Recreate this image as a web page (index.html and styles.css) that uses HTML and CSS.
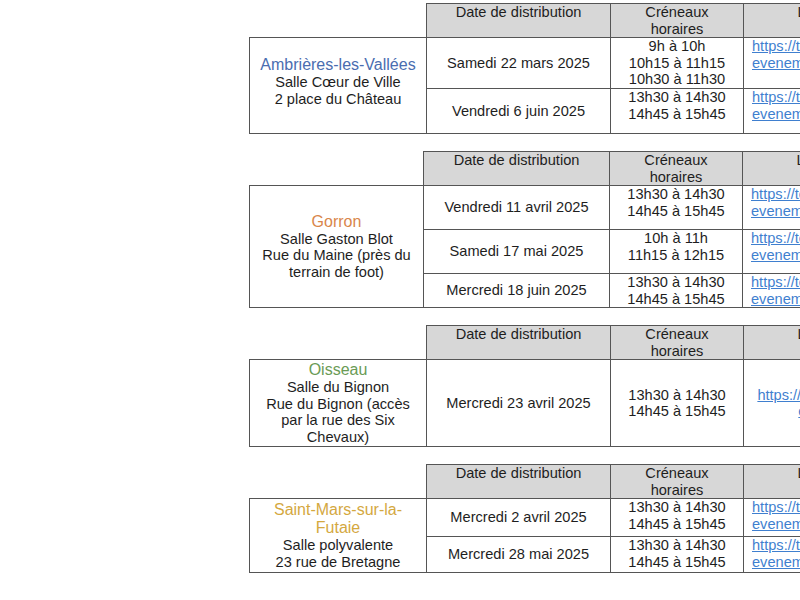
FILE: index.html
```html
<!DOCTYPE html>
<html lang="fr">
<head>
<meta charset="utf-8">
<title>Distributions</title>
<link rel="stylesheet" href="styles.css">
</head>
<body>
<div class="page">

  <table class="sched">
    <colgroup><col class="c-place"><col class="c-date"><col class="c-time"><col class="c-link"></colgroup>
    <tr class="head"><th class="blank"></th><th>Date de distribution</th><th>Créneaux<br>horaires</th><th>Lien d'inscription</th></tr>
    <tr class="h51">
      <td class="place up" rowspan="2"><span class="name ambrieres">Ambrières-les-Vallées</span>Salle Cœur de Ville<br>2 place du Château</td>
      <td class="date">Samedi 22 mars 2025</td>
      <td class="time">9h à 10h<br>10h15 à 11h15<br>10h30 à 11h30</td>
      <td class="link"><a href="#">https://tessera.secours-53.org/<br>evenements/ambrieres-mars25</a></td>
    </tr>
    <tr class="h45">
      <td class="date">Vendredi 6 juin 2025</td>
      <td class="time">13h30 à 14h30<br>14h45 à 15h45</td>
      <td class="link"><a href="#">https://tessera.secours-53.org/<br>evenements/ambrieres-juin25</a></td>
    </tr>
  </table>

  <table class="sched narrow">
    <colgroup><col class="c-place"><col class="c-date"><col class="c-time"><col class="c-link"></colgroup>
    <tr class="head"><th class="blank"></th><th>Date de distribution</th><th>Créneaux<br>horaires</th><th>Lien d'inscription</th></tr>
    <tr class="h44">
      <td class="place" rowspan="3"><span class="name gorron">Gorron</span>Salle Gaston Blot<br>Rue du Maine (près du terrain de foot)</td>
      <td class="date">Vendredi 11 avril 2025</td>
      <td class="time">13h30 à 14h30<br>14h45 à 15h45</td>
      <td class="link"><a href="#">https://tessera.secours-53.org/<br>evenements/gorron-avril25</a></td>
    </tr>
    <tr class="h44">
      <td class="date">Samedi 17 mai 2025</td>
      <td class="time">10h à 11h<br>11h15 à 12h15</td>
      <td class="link"><a href="#">https://tessera.secours-53.org/<br>evenements/gorron-mai25</a></td>
    </tr>
    <tr class="h34">
      <td class="date">Mercredi 18 juin 2025</td>
      <td class="time">13h30 à 14h30<br>14h45 à 15h45</td>
      <td class="link"><a href="#">https://tessera.secours-53.org/<br>evenements/gorron-juin25</a></td>
    </tr>
  </table>

  <table class="sched">
    <colgroup><col class="c-place"><col class="c-date"><col class="c-time"><col class="c-link"></colgroup>
    <tr class="head"><th class="blank"></th><th>Date de distribution</th><th>Créneaux<br>horaires</th><th>Lien d'inscription</th></tr>
    <tr class="h87">
      <td class="place"><span class="name oisseau">Oisseau</span>Salle du Bignon<br>Rue du Bignon (accès par la rue des Six Chevaux)</td>
      <td class="date">Mercredi 23 avril 2025</td>
      <td class="time mid">13h30 à 14h30<br>14h45 à 15h45</td>
      <td class="link center"><a href="#">https://tessera.secours53.org/<br>evenements/oise</a></td>
    </tr>
  </table>

  <table class="sched">
    <colgroup><col class="c-place"><col class="c-date"><col class="c-time"><col class="c-link"></colgroup>
    <tr class="head"><th class="blank"></th><th>Date de distribution</th><th>Créneaux<br>horaires</th><th>Lien d'inscription</th></tr>
    <tr class="h38">
      <td class="place" rowspan="2"><span class="name saintmars">Saint-Mars-sur-la-Futaie</span>Salle polyvalente<br>23 rue de Bretagne</td>
      <td class="date">Mercredi 2 avril 2025</td>
      <td class="time">13h30 à 14h30<br>14h45 à 15h45</td>
      <td class="link"><a href="#">https://tessera.secours-53.org/<br>evenements/saint-mars-avril25</a></td>
    </tr>
    <tr class="h36">
      <td class="date">Mercredi 28 mai 2025</td>
      <td class="time">13h30 à 14h30<br>14h45 à 15h45</td>
      <td class="link"><a href="#">https://tessera.secours-53.org/<br>evenements/saint-mars-mai25</a></td>
    </tr>
  </table>

</div>
</body>
</html>
```

FILE: styles.css
```css
* { box-sizing: border-box; }

html, body {
  margin: 0;
  overflow: hidden;
  background: #ffffff;
}

body {
  font-family: "Liberation Sans", Arial, sans-serif;
  font-size: 14.6px;
  line-height: 16.5px;
  color: #1e1e1e;
}

.page {
  display: flex;
  flex-direction: column;
  align-items: flex-start;
  gap: 17px;
  padding: 3px 0 0 249px;
}

.sched {
  border-collapse: collapse;
  table-layout: fixed;
  width: 710px;
}

.sched th,
.sched td {
  border: 1px solid #555555;
  padding: 0 4px;
  text-align: center;
  vertical-align: top;
  font-weight: normal;
}

.sched th {
  background: #d7d7d7;
}

.sched th.blank {
  background: transparent;
  border: none;
}

.c-place { width: 177px; }
.c-date { width: 184px; }
.c-time { width: 133px; }
.c-link { width: 216px; }

.narrow .c-place { width: 174px; }
.narrow .c-date { width: 186px; }

.head { height: 34px; }
.h34 { height: 34px; }
.h36 { height: 36px; }
.h38 { height: 38px; }
.h44 { height: 44px; }
.h45 { height: 45px; }
.h51 { height: 51px; }
.h87 { height: 87px; }

.sched td.place {
  vertical-align: middle;
}

.sched td.place.up {
  padding-bottom: 8px;
}

.name {
  display: block;
  font-size: 16px;
  line-height: 18px;
}

.ambrieres { color: #4a6db0; }
.gorron { color: #d9864a; }
.oisseau { color: #6a9b55; }
.saintmars { color: #d4a83f; }

.sched td.date {
  vertical-align: middle;
}

.sched td.time.mid {
  vertical-align: middle;
}

.sched td.link {
  text-align: left;
  padding-left: 8px;
  white-space: nowrap;
  overflow: hidden;
}

.sched td.link.center {
  text-align: center;
  vertical-align: middle;
}

.link a {
  color: #3f7fcf;
  text-decoration: underline;
}
```
